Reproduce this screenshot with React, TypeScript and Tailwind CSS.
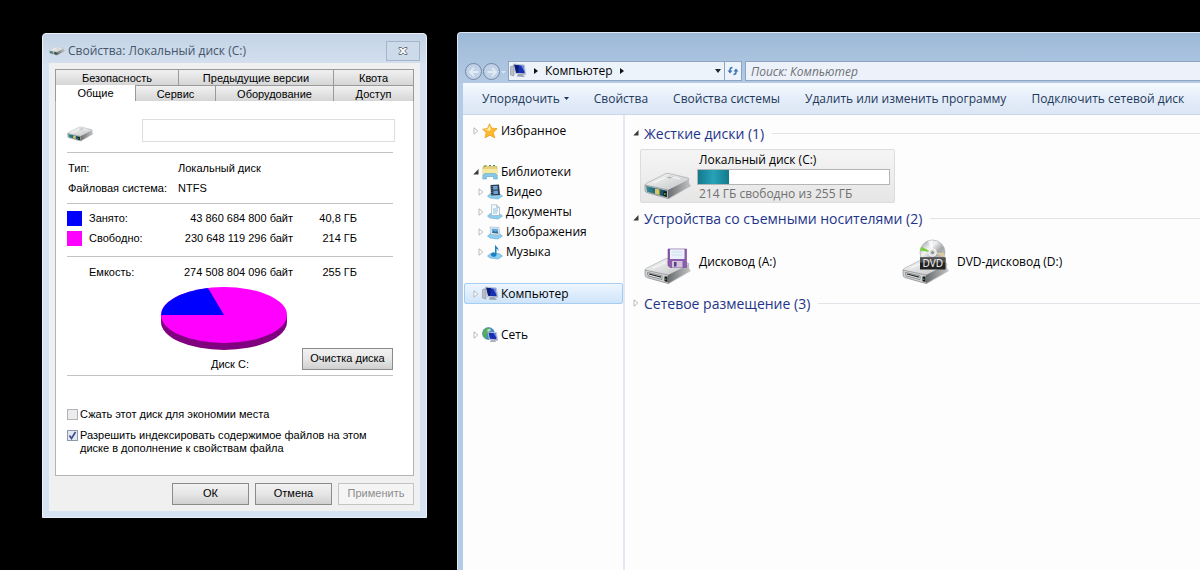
import { PropsWithChildren, ReactNode } from 'react';
import clsx from 'clsx';

/* ---------- icons ---------- */

type DriveKind = 'hdd' | 'floppy' | 'dvd';

interface DriveIconProps {
    kind: DriveKind;
    id: string;
    className?: string;
}

function DriveIcon({kind, id, className}: DriveIconProps) {
    return (
        <svg viewBox={kind === 'hdd' ? '0 18 48 28' : '0 0 48 46'} className={className} aria-hidden="true">
            <defs>
                <linearGradient id={`${id}-top`} x1="0" y1="0" x2="1" y2="1">
                    <stop offset="0" stopColor="#fbfbfb" />
                    <stop offset="1" stopColor="#bfc1c2" />
                </linearGradient>
                <linearGradient id={`${id}-side`} x1="0" y1="0" x2="1" y2="0">
                    <stop offset="0" stopColor="#6b6e70" />
                    <stop offset="1" stopColor="#bcbebf" />
                </linearGradient>
                <linearGradient id={`${id}-disc`} x1="0" y1="0" x2="1" y2="1">
                    <stop offset="0" stopColor="#8f9396" />
                    <stop offset="0.35" stopColor="#f4f4f4" />
                    <stop offset="0.6" stopColor="#a4a7a9" />
                    <stop offset="1" stopColor="#dedede" />
                </linearGradient>
                <linearGradient id={`${id}-teal`} x1="0" y1="0" x2="1" y2="0">
                    <stop offset="0" stopColor="#3d8e88" />
                    <stop offset="0.5" stopColor="#1f5f86" />
                    <stop offset="1" stopColor="#1c4a52" />
                </linearGradient>
            </defs>
            <path d="M3 39 25 45 47 32 45 29 24 41Z" fill="#000" opacity="0.2" />
            <path d="M1 31Q1 30 3 29L21 20Q23 19 25 19.500L44 24Q46 25 44 26.500L26 36Q24 37 22 36.500L2 32Z" fill={`url(#${id}-top)`} stroke="#9c9fa1" strokeWidth="0.6" />
            <path d="M1 31 24 36V44.500L3 38.500Q1 38 1 36Z" fill="#d0d2d3" stroke="#7c7f81" strokeWidth="0.6" />
            <path d="M24 36 45 25.500V31Q45 32 44 33L24 44.500Z" fill={`url(#${id}-side)`} />
            <path d="M21 23 26 21.500 30 22.500 26 24.500Z" fill="#a9acae" />
            <path d="M9 29 25 22 36 25" fill="none" stroke="#fff" strokeWidth="0.8" />
            {kind === 'hdd' &&
                <>
                    <path d="M2 32 23 36.800V43.300L3 37.800Z" fill={`url(#${id}-teal)`} />
                    <path d="M11 34.500 15.500 35.600V41L11 39.800Z" fill="#d8c85c" />
                    <path d="M19.500 37.500h3v5l-3-.8Z" fill="#111" />
                    <path d="M20.300 39h1.200v2H20.300Z" fill="#6bd05a" />
                </>
            }
            {kind !== 'hdd' &&
                <>
                    <path d="M3.500 33.500 18 36.800V40.500L4 36.800Z" fill="#eceded" stroke="#66696b" strokeWidth="0.7" />
                    <path d="M5 35 17 38.200" stroke="#222" strokeWidth="1.200" />
                    <path d="M20.500 37.500h3v5.500l-3-.8Z" fill="#161616" />
                    <path d="M21.300 39.500h1v1.600h-1Z" fill="#58b34f" />
                </>
            }
            {kind === 'floppy' &&
                <>
                    <path d="M24 10H42.500V28.500H26L24 26.500Z" fill="#8d5cae" stroke="#70458f" strokeWidth="0.6" />
                    <path d="M26 10.300H40.500V20H26Z" fill="#eaf1fa" />
                    <path d="M28 13h10M28 16h10" stroke="#c8d6e6" strokeWidth="0.7" />
                    <path d="M28 22H38.500V28.500H28Z" fill="#cfc4dc" />
                    <path d="M30 23h2.500v4.500H30Z" fill="#5e3a80" />
                </>
            }
            {kind === 'dvd' &&
                <>
                    <circle cx="30.500" cy="13.500" r="12.500" fill={`url(#${id}-disc)`} stroke="#a2a5a7" strokeWidth="0.6" />
                    <path d="M30.500 13.500 19.500 7.800A12.500 12.500 0 0 0 18.300 11.500Z" fill="#79cf3c" />
                    <path d="M30.500 13.500 42.500 14A12.500 12.500 0 0 1 42 18Z" fill="#dbc9a2" />
                    <path d="M30.500 13.500 26 2 31 1Z" fill="#fff" opacity="0.7" />
                    <circle cx="30.500" cy="13.500" r="3.800" fill="#d9dbdc" stroke="#fff" strokeWidth="0.9" />
                    <circle cx="30.500" cy="13.500" r="1.500" fill="#8f9294" />
                    <path d="M18 18.500H43.500V30.500H18Z" fill="#222" />
                    <path d="M18 18.500H43.500V23.500H18Z" fill="#525252" />
                    <text x="30.700" y="28.300" textAnchor="middle" fontSize="10" fill="#fff" fontFamily="Open Sans, sans-serif">DVD</text>
                </>
            }
        </svg>
    );
}

function ComputerShape() {
    return (
        <>
            <path d="M.5 3.500 4 2.500V13L.5 12Z" fill="#b9bec6" stroke="#80868f" strokeWidth="0.5" />
            <path d="M3.500 1 14.300 2 15.700 11.500 5.500 10.500Z" fill="#dde3ee" stroke="#8d96a8" strokeWidth="0.5" />
            <path d="M4.300 1.800 13.600 2.700 14.800 10.600 6.200 9.700Z" fill="#1730ae" />
            <path d="M4.300 1.800 9 2.200 8 9.900 6.200 9.700Z" fill="#0a1b78" />
            <path d="M11 2.500 13.600 2.700 14.500 8.700Z" fill="#6d8ee8" />
            <path d="M8.500 10.800 12.500 11.200 15 14 6.500 13.500Z" fill="#9aa1ae" />
        </>
    );
}

type SmallIconName = 'star' | 'library' | 'video' | 'document' | 'picture' | 'music' | 'computer' | 'network';

function LibraryBase() {
    return <path d="M.5 12 3.500 9.500 12 9.500 15.500 12 11 15 3 14Z" fill="#8fcdee" stroke="#4f9cc8" strokeWidth="0.5" />;
}

function SmallIcon({name}: { name: SmallIconName }) {
    return (
        <svg viewBox="0 0 16 16" className="size-4 shrink-0" aria-hidden="true">
            {name === 'star' &&
                <>
                    <path d="M7.500.8 9.800 5.200 15.200 5.600 11.300 9.400 12.800 15 8 12.200 3 14.800 4.200 9.400.6 6.300 5.500 5.400Z" fill="#ffb92e" stroke="#e39a1b" strokeWidth="0.7" />
                    <path d="M7.500 2.500 8.800 6 8 8 2.500 6.700 5.900 6.200Z" fill="#fff0a8" />
                </>
            }
            {name === 'library' &&
                <>
                    <path d="M1 2.500 5 1.500 6 2.500H15V12H1Z" fill="#e5d178" stroke="#b6a250" strokeWidth="0.5" />
                    <path d="M2 2h2M7 1.500h2M11 1.500h2" stroke="#4b8c62" />
                    <path d="M.8 5H15.200V12H.8Z" fill="#f5e9a4" />
                    <path d="M1 11 3 9.500H13L15 11 15.500 15H11.500V12.500H4.500V15H.7Z" fill="#85c8ea" stroke="#569fc6" strokeWidth="0.5" />
                </>
            }
            {name === 'video' &&
                <>
                    <LibraryBase />
                    <path d="M3.500 1 12 .5 13 11 4 11.500Z" fill="#27384a" />
                    <path d="M6 2 10.500 1.700 10.800 5.500 6.200 5.800ZM6.300 6.700 10.900 6.500 11.100 10 6.500 10.300Z" fill="#6fa1d2" />
                    <path d="M5 2v9" stroke="#b5c0cc" strokeWidth="0.6" strokeDasharray="1 1" />
                </>
            }
            {name === 'document' &&
                <>
                    <LibraryBase />
                    <path d="M4.500.8H9.500L12.500 3.500V11.500H4.500Z" fill="#f6fafd" stroke="#8fa8bd" strokeWidth="0.6" />
                    <path d="M9.500.8V3.500H12.500" fill="#c7dbea" stroke="#8fa8bd" strokeWidth="0.5" />
                    <path d="M6 5h5M6 7h5M6 9h4" stroke="#78aed1" strokeWidth="0.8" />
                </>
            }
            {name === 'picture' &&
                <>
                    <LibraryBase />
                    <path d="M3 3 12 3.500 13 11 4 10.500Z" fill="#f7fbff" stroke="#8fa8bd" strokeWidth="0.6" />
                    <path d="M4.500 4.500 11 4.800 11.500 9.500 5 9Z" fill="#62a9df" />
                    <path d="M5 9 6.500 6.500 8.500 8 10 7 11.500 9.500Z" fill="#356f8c" />
                </>
            }
            {name === 'music' &&
                <>
                    <LibraryBase />
                    <path d="M8 .5C9 3 12 3.500 11.500 7 11 5.500 10 5 9.500 4.800V10.500A2.800 2.200 0 1 1 8 8.700Z" fill="#1d7fc4" />
                </>
            }
            {name === 'computer' && <ComputerShape />}
            {name === 'network' &&
                <>
                    <circle cx="6.500" cy="6.500" r="6" fill="#3a8fcb" stroke="#2b6892" strokeWidth="0.5" />
                    <path d="M1 5C2 2 5 .5 7 .8 6 3 7 4 5 6 4 8 5 10 4 12 1.500 10.500.5 8 1 5Z" fill="#57b04d" />
                    <path d="M5 3 8 1.500 9 3 6 5Z" fill="#c4e9c4" />
                    <path d="M5.500 4.500 14.500 5.500 15.700 13.500 7 12.500Z" fill="#dde3ee" stroke="#8d96a8" strokeWidth="0.5" />
                    <path d="M6.400 5.500 13.700 6.300 14.700 12.500 7.800 11.700Z" fill="#1730ae" />
                    <path d="M11.500 6 13.700 6.300 14.500 11Z" fill="#6d8ee8" />
                    <path d="M9 13h4l1 2H8Z" fill="#a9afba" />
                </>
            }
        </svg>
    );
}

function Expander({open}: { open?: boolean }) {
    return (
        <svg viewBox="0 0 6 8" className="h-2 w-1.5 shrink-0" aria-hidden="true">
            {open
                ? <path d="M5.500 1V6.500H.3Z" fill="#3a3a3a" />
                : <path d="M1 .8 4.800 4 1 7.200Z" fill="#fff" stroke="#a9a9a9" strokeWidth="0.8" />
            }
        </svg>
    );
}

/* ---------- properties dialog ---------- */

const backTabs = [
    {label: 'Безопасность', width: 'w-[123px]'},
    {label: 'Предыдущие версии', width: 'w-[155px]'},
    {label: 'Квота', width: 'flex-1'},
];

const frontTabs = [
    {label: 'Общие', width: 'w-20', active: true},
    {label: 'Сервис', width: 'w-20'},
    {label: 'Оборудование', width: 'w-[118px]'},
    {label: 'Доступ', width: 'flex-1'},
];

interface TabProps {
    label: string;
    width: string;
    active?: boolean;
}

function Tab({label, width, active}: TabProps) {
    return (
        <button
            type="button"
            role="tab"
            aria-selected={!!active}
            className={clsx(
                'h-4 border-r border-[#9a9a9a] text-center leading-[14px]',
                width,
                active ? 'bg-white' : 'border-t bg-linear-to-b from-[#f1f1f1] to-[#d6d6d6]',
            )}
        >
            {label}
        </button>
    );
}

interface DialogButtonProps extends PropsWithChildren {
    className: string;
    disabled?: boolean;
}

function DialogButton({children, className, disabled}: DialogButtonProps) {
    return (
        <button
            type="button"
            disabled={disabled}
            className={clsx(
                'h-[22px] border',
                disabled
                    ? 'border-[#c4c4c4] bg-[#f4f4f4] text-[#8e8e8e]'
                    : 'border-[#8b8b8b] bg-linear-to-b from-[#f2f2f2] via-[#e6e6e6] via-50% to-[#d0d0d0]',
                className,
            )}
        >
            {children}
        </button>
    );
}

function Checkbox({id, checked, children}: PropsWithChildren<{ id: string; checked?: boolean }>) {
    return (
        <div className="flex items-start gap-0.5">
            <span className="relative mt-px size-[11px] shrink-0">
                <input
                    id={id}
                    type="checkbox"
                    defaultChecked={checked}
                    className="peer block size-[11px] appearance-none border border-[#b0b3b8] bg-[#ececec] checked:border-[#8e9aac] checked:bg-[#e3e9f2]"
                />
                <svg viewBox="0 0 11 11" className="pointer-events-none absolute inset-0 hidden peer-checked:block" aria-hidden="true">
                    <path d="M2.500 5.500 4.500 8.500 8.500 2" fill="none" stroke="#3a4a8c" strokeWidth="1.600" />
                </svg>
            </span>
            <label htmlFor={id} className="pr-6 leading-[13px]">{children}</label>
        </div>
    );
}

function UsagePie() {
    return (
        <svg viewBox="0 0 126 63" className="h-[63px] w-[126px]" role="img" aria-label="Диск C:">
            <path d="M0 28V35A63 28 0 0 0 126 35V28Z" fill="#800080" />
            <ellipse cx="63" cy="28" rx="63" ry="28" fill="#f0f" />
            <path d="M63 28H0A63 28 0 0 1 47 1Z" fill="#00f" />
        </svg>
    );
}

function PropertiesDialog() {
    return (
        <section className="w-[385px] shrink-0 rounded-t-sm border border-[#eaf1f9] bg-[#d6e2f1] px-1.5 pb-1.5 font-['Liberation_Sans',Arial,sans-serif] text-[11px] text-black">
            <header className="-mx-1.5 flex h-[29px] items-center rounded-t-sm bg-linear-to-b from-[#c3d3e5] to-[#d3dfee] px-1.5">
                <DriveIcon kind="hdd" id="title-drive" className="mt-1 h-2.5 w-4" />
                <h1 className="ml-[3px] flex-1 pt-1 font-['Open_Sans',sans-serif] text-[12px] text-[#45566b]">Свойства: Локальный диск (C:)</h1>
                <button type="button" aria-label="Закрыть" className="mt-1 flex h-5 w-[34px] items-center justify-center border border-[#a5b6cb] bg-[#cddaea]">
                    <svg viewBox="0 0 10 8" className="h-2 w-2.5" aria-hidden="true">
                        <path d="M1 .5H3.500L5 2.200 6.500.5H9V1.500L6.700 4 9 6.500V7.500H6.500L5 5.800 3.500 7.500H1V6.500L3.300 4 1 1.500Z" fill="#fff" stroke="#5d6470" strokeWidth="0.9" />
                    </svg>
                </button>
            </header>
            <div className="bg-[#f0f0f0] px-1.5 pb-1.5 pt-1.5">
                <div role="tablist" aria-label="Свойства">
                    <div className="flex border-l border-[#9a9a9a]">
                        {backTabs.map((tab) => <Tab key={tab.label} {...tab} />)}
                    </div>
                    <div className="flex border-l border-[#9a9a9a]">
                        {frontTabs.map((tab) => <Tab key={tab.label} {...tab} />)}
                    </div>
                </div>
                <div className="border border-t-0 border-[#b4b4b4] bg-white pb-5 pl-[11px] pr-3 pt-[17px]">
                    <div className="flex h-6 items-center">
                        <DriveIcon kind="hdd" id="panel-drive" className="mt-2 h-4 w-[27px]" />
                        <input type="text" aria-label="Метка тома" className="ml-12 mr-[6px] h-[23px] min-w-0 flex-1 border border-[#dedede] bg-white px-1" />
                    </div>
                    <dl className="mr-2 mt-[10px] grid grid-cols-[110px_1fr] gap-y-1 border-y border-[#c3c3c3] py-[7px] pl-px leading-4">
                        <dt>Тип:</dt>
                        <dd>Локальный диск</dd>
                        <dt className="whitespace-nowrap">Файловая система:</dt>
                        <dd>NTFS</dd>
                    </dl>
                    <table className="mt-1 w-[290px] leading-5">
                        <tbody>
                            <tr>
                                <td className="w-[22px]"><span className="block size-[15px] bg-[#00f]" /></td>
                                <th scope="row" className="w-20 text-left font-normal">Занято:</th>
                                <td className="text-right">43 860 684 800 байт</td>
                                <td className="w-16 text-right">40,8 ГБ</td>
                            </tr>
                            <tr>
                                <td><span className="block size-[15px] bg-[#f0f]" /></td>
                                <th scope="row" className="text-left font-normal">Свободно:</th>
                                <td className="text-right">230 648 119 296 байт</td>
                                <td className="text-right">214 ГБ</td>
                            </tr>
                        </tbody>
                    </table>
                    <table className="mt-2 w-[326px] border-t border-[#c3c3c3] leading-5">
                        <tbody>
                            <tr className="h-[30px]">
                                <th scope="row" className="w-[102px] pl-[22px] text-left font-normal">Емкость:</th>
                                <td className="text-right">274 508 804 096 байт</td>
                                <td className="w-16 text-right">255 ГБ</td>
                                <td className="w-9" />
                            </tr>
                        </tbody>
                    </table>
                    <div className="mr-2 flex items-end border-b border-[#c3c3c3] pb-[3px]">
                        <figure className="ml-[94px] flex w-[126px] flex-col items-center">
                            <UsagePie />
                            <figcaption className="mt-1.5 pl-3 leading-4">Диск C:</figcaption>
                        </figure>
                        <DialogButton className="mb-0.5 ml-auto w-[91px] whitespace-nowrap">Очистка диска</DialogButton>
                    </div>
                    <div className="mt-8 flex flex-col gap-2">
                        <Checkbox id="compress">Сжать этот диск для экономии места</Checkbox>
                        <Checkbox id="index" checked>
                            Разрешить индексировать содержимое файлов на этом диске в дополнение к свойствам файла
                        </Checkbox>
                    </div>
                </div>
                <div className="mt-[7px] flex justify-end gap-1.5">
                    <DialogButton className="w-[77px]">ОК</DialogButton>
                    <DialogButton className="w-[77px]">Отмена</DialogButton>
                    <DialogButton className="w-[76px]" disabled>Применить</DialogButton>
                </div>
            </div>
        </section>
    );
}

/* ---------- explorer window ---------- */

const commands = ['Свойства', 'Свойства системы', 'Удалить или изменить программу', 'Подключить сетевой диск'];

const libraries: { icon: SmallIconName; label: string }[] = [
    {icon: 'video', label: 'Видео'},
    {icon: 'document', label: 'Документы'},
    {icon: 'picture', label: 'Изображения'},
    {icon: 'music', label: 'Музыка'},
];

interface NavItemProps {
    icon: SmallIconName;
    label: string;
    open?: boolean;
    child?: boolean;
    selected?: boolean;
}

function NavItem({icon, label, open, child, selected}: NavItemProps) {
    return (
        <a
            href="#"
            aria-current={selected ? 'page' : undefined}
            className={clsx(
                'flex items-center gap-[3px] border',
                child ? 'h-5 pl-[13px]' : 'h-[21px] pl-2',
                selected ? 'rounded-xs border-[#a5cdf0] bg-linear-to-b from-[#eef6fe] to-[#cfe4fa]' : 'border-transparent',
            )}
        >
            <Expander open={open} />
            <SmallIcon name={icon} />
            <span>{label}</span>
        </a>
    );
}

function NavigationPane() {
    return (
        <nav aria-label="Область переходов" className="flex w-[162px] shrink-0 flex-col gap-5 border-r-2 border-[#e3e9f4] pl-px pt-[5px]">
            <NavItem icon="star" label="Избранное" />
            <div className="pb-px">
                <NavItem icon="library" label="Библиотеки" open />
                {libraries.map((item) => <NavItem key={item.label} {...item} child />)}
            </div>
            <NavItem icon="computer" label="Компьютер" selected />
            <NavItem icon="network" label="Сеть" />
        </nav>
    );
}

interface DriveGroupProps extends PropsWithChildren {
    title: string;
    open?: boolean;
}

function DriveGroup({title, open, children}: DriveGroupProps) {
    return (
        <section>
            <h2 className="flex h-5 items-center text-[14px] text-[#1f3488]">
                <Expander open={open} />
                <span className="ml-[5px] whitespace-nowrap">{title}</span>
                <span className="ml-2 h-px flex-1 bg-[#e0e3e8]" />
            </h2>
            {children}
        </section>
    );
}

function Drive({kind, label}: { kind: DriveKind; label: ReactNode }) {
    return (
        <li className="flex w-[258px] items-center gap-[7px]">
            <DriveIcon kind={kind} id={`item-${kind}`} className="h-[46px] w-12" />
            <span>{label}</span>
        </li>
    );
}

function ExplorerWindow() {
    return (
        <section className="flex min-w-0 flex-1 flex-col overflow-hidden rounded-tl-sm border-l border-t border-[#dbe7f4] bg-[#b4cce6] pl-[5px] font-['Open_Sans',sans-serif] text-[12px] text-black">
            <header className="-ml-[5px] bg-linear-to-b from-[#9db9d7] to-[#b4cae5] pl-[7px] pt-7">
                <div className="flex h-[22px] items-start">
                    <div className="flex w-[43px] gap-px pt-0.5">
                        <button type="button" aria-label="Назад" className="flex size-[17px] items-center justify-center rounded-full border border-[#7187a3] bg-[#c1d2e6]">
                            <svg viewBox="0 0 10 10" className="size-2.5" aria-hidden="true">
                                <path d="M5 1 1 5 5 9M1.500 5H9.500" fill="none" stroke="#e1ebf6" strokeWidth="1.800" />
                            </svg>
                        </button>
                        <button type="button" aria-label="Вперед" className="flex size-[17px] items-center justify-center rounded-full border border-[#7187a3] bg-[#c1d2e6]">
                            <svg viewBox="0 0 10 10" className="size-2.5" aria-hidden="true">
                                <path d="M5 1 9 5 5 9M8.500 5H.5" fill="none" stroke="#e1ebf6" strokeWidth="1.800" />
                            </svg>
                        </button>
                        <svg viewBox="0 0 5 3" className="mt-2 h-[3px] w-[5px]" aria-hidden="true">
                            <path d="M0 0H5L2.500 3Z" fill="#d5e3f2" />
                        </svg>
                    </div>
                    <div className="flex h-5 w-[234px] items-center border border-[#8ca4c0] bg-[#edf3fa] pl-px">
                        <SmallIcon name="computer" />
                        <svg viewBox="0 0 4 6" className="ml-2 h-1.5 w-1" aria-hidden="true"><path d="M0 0 4 3 0 6Z" fill="#111" /></svg>
                        <a href="#" className="ml-[7px]">Компьютер</a>
                        <svg viewBox="0 0 4 6" className="ml-[7px] h-1.5 w-1" aria-hidden="true"><path d="M0 0 4 3 0 6Z" fill="#111" /></svg>
                        <button type="button" aria-label="Предыдущие расположения" className="ml-auto flex h-full w-3 items-center justify-center">
                            <svg viewBox="0 0 6 4" className="h-1 w-1.5" aria-hidden="true"><path d="M0 0H6L3 4Z" fill="#1c2634" /></svg>
                        </button>
                        <button type="button" aria-label="Обновить" className="flex h-full w-[17px] items-center justify-center border-l border-[#8ca4c0]">
                            <svg viewBox="0 0 12 12" className="size-3" aria-hidden="true">
                                <path d="M5.500 2.500Q3 2.500 3 5V6.500" fill="none" stroke="#3a77b8" strokeWidth="1.500" />
                                <path d="M.5 5.500H5.500L3 8.500Z" fill="#3a77b8" />
                                <path d="M6.500 9.500Q9 9.500 9 7V6" fill="none" stroke="#3a77b8" strokeWidth="1.500" />
                                <path d="M6.500 6.500H11.500L9 3.500Z" fill="#3a77b8" />
                            </svg>
                        </button>
                    </div>
                    <input
                        type="search"
                        aria-label="Поиск"
                        placeholder="Поиск: Компьютер"
                        className="ml-[3px] h-5 min-w-0 flex-1 border border-r-0 border-[#8ca4c0] bg-[#edf2fa] pl-[5px] italic placeholder:text-[#6d7176]"
                    />
                </div>
            </header>
            <div className="flex h-8 items-center gap-[25px] overflow-hidden whitespace-nowrap border-b border-[#cbd8ea] bg-linear-to-b from-[#f6fafe] via-[#e4edf9] via-50% to-[#dce6f4] pl-[19px] text-[#1e395b]">
                <button type="button" className="flex items-center gap-1">
                    Упорядочить
                    <svg viewBox="0 0 5 3" className="h-[3px] w-[5px]" aria-hidden="true"><path d="M0 0H5L2.500 3Z" fill="#1e395b" /></svg>
                </button>
                {commands.map((command) => <button type="button" key={command}>{command}</button>)}
            </div>
            <div className="flex flex-1 bg-[#fdfdfe]">
                <NavigationPane />
                <main className="min-w-0 flex-1 pl-2 pt-2">
                    <DriveGroup title="Жесткие диски (1)" open>
                        <div className="mb-[5px] ml-[7px] mt-1.5 flex h-[54px] w-[255px] items-end gap-[5px] rounded-xs border border-[#dcdcdc] bg-linear-to-b from-[#f5f5f5] to-[#e6e6e6] pb-0.5 pl-[3px]">
                            <DriveIcon kind="hdd" id="item-hdd" className="h-7 w-12" />
                            <div className="w-[193px] self-start">
                                <p className="pl-0.5 leading-[18px] pt-px">Локальный диск (C:)</p>
                                <div className="h-4 border border-[#b5b5b5] bg-white" role="meter" aria-label="Занято" aria-valuemin={0} aria-valuemax={255} aria-valuenow={41}>
                                    <div className="h-full bg-linear-to-r from-[#14798c] via-[#27a3b8] to-[#14798c]" style={{width: `${(41 / 255) * 100}%`}} />
                                </div>
                                <p className="pl-0.5 leading-[18px] text-[#707070]">214 ГБ свободно из 255 ГБ</p>
                            </div>
                        </div>
                    </DriveGroup>
                    <DriveGroup title="Устройства со съемными носителями (2)" open>
                        <ul className="mb-2 ml-[11px] mt-[11px] flex flex-wrap">
                            <Drive kind="floppy" label="Дисковод (A:)" />
                            <Drive kind="dvd" label="DVD-дисковод (D:)" />
                        </ul>
                    </DriveGroup>
                    <DriveGroup title="Сетевое размещение (3)" />
                </main>
            </div>
        </section>
    );
}

export default function App() {
    return (
        <div className="flex min-h-screen gap-[30px] bg-black pl-[42px] pt-8">
            <div className="pt-px">
                <PropertiesDialog />
            </div>
            <ExplorerWindow />
        </div>
    );
}
